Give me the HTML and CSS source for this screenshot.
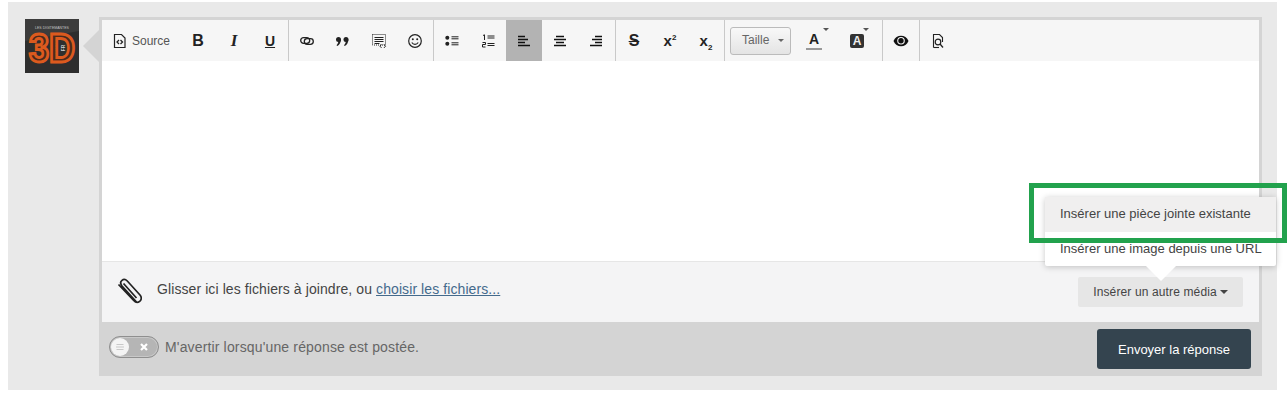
FILE: index.html
```html
<!DOCTYPE html>
<html lang="fr">
<head>
<meta charset="utf-8">
<title>Réponse</title>
<link rel="stylesheet" href="styles.css">
</head>
<body>
<div class="outer">
  <svg class="avatar" viewBox="0 0 54 54" width="54" height="54">
    <rect width="54" height="54" fill="#3c3c3c"/>
    <path d="M0 54V22L54 12V54Z" fill="#2e2e2e"/>
    <text x="27" y="10" class="logo-top" text-anchor="middle">LES DIGITEMANTES</text>
    <text x="4" y="43" class="logo-3d" textLength="46" lengthAdjust="spacingAndGlyphs">3D</text>
    <text x="38" y="31" class="logo-fr" text-anchor="middle" transform="rotate(-90 38 29)">FR</text>
  </svg>
  <div class="pointer"></div>
  <div class="editor">
    <div class="toolbar">
      <div class="group">
        <button class="tool tool-source">
          <svg class="ico" viewBox="0 0 16 16"><path d="M2.500 1.500H9.500L13 5V14.500H2.500Z" fill="none" stroke="#222" stroke-width="1.200"/><path d="M7 7 5 9l2 2M8.500 7l2 2-2 2" fill="none" stroke="#222" stroke-width="1.300"/></svg>
          <span>Source</span>
        </button>
        <button class="tool"><b class="glyph glyph-b">B</b></button>
        <button class="tool"><i class="glyph glyph-i">I</i></button>
        <button class="tool"><b class="glyph glyph-u">U</b></button>
      </div>
      <div class="group">
        <button class="tool"><svg class="ico" viewBox="0 0 16 16"><rect x="1.700" y="4.700" width="9" height="5.600" rx="2.800" fill="none" stroke="#222" stroke-width="1.300"/><rect x="5.300" y="5.700" width="9" height="5.600" rx="2.800" fill="none" stroke="#222" stroke-width="1.300"/></svg></button>
        <button class="tool"><svg class="ico" viewBox="0 0 16 16"><circle cx="3.500" cy="6.500" r="2.500" fill="#222"/><circle cx="11" cy="6.500" r="2.500" fill="#222"/><path d="M5.900 6.500C5.900 9.500 4.500 11.800 2.300 13L1.500 12.200C2.800 11 3.300 9.800 3.300 8ZM13.400 6.500c0 3-1.400 5.300-3.600 6.500L9 12.200C10.300 11 10.800 9.800 10.800 8Z" fill="#222"/></svg></button>
        <button class="tool"><svg class="ico" viewBox="0 0 16 16"><rect x="1.500" y="1.500" width="13" height="10.500" fill="none" stroke="#222" stroke-dasharray="1 1"/><path d="M3.500 4.500h9M3.500 6.500h9M3.500 8.500h9M3.500 10.500h5" stroke="#222" stroke-width="1.200"/><path d="M10.500 11.500 9 13.200l1.500 1.700M13 11.500l1.500 1.700-1.500 1.700" fill="none" stroke="#222"/></svg></button>
        <button class="tool"><svg class="ico" viewBox="0 0 16 16"><circle cx="8" cy="8" r="6.300" fill="none" stroke="#222" stroke-width="1.200"/><circle cx="5.800" cy="6.300" r="1" fill="#222"/><circle cx="10.200" cy="6.300" r="1" fill="#222"/><path d="M4.800 9.500c1.500 2.400 4.900 2.400 6.400 0" fill="none" stroke="#222" stroke-width="1.200"/></svg></button>
      </div>
      <div class="group group-align">
        <button class="tool"><svg class="ico" viewBox="0 0 16 16"><circle cx="3.300" cy="4.800" r="2" fill="#222"/><circle cx="3.300" cy="10.800" r="2" fill="#222"/><path d="M7.500 3.800h7M7.500 5.800h7M7.500 9.800h7M7.500 11.800h7" stroke="#222"/></svg></button>
        <button class="tool"><svg class="ico" viewBox="0 0 16 16"><path d="M3 2.500 4.500 1.800V7M2.500 9.500h3V11.500H2.500V14h3" fill="none" stroke="#222"/><path d="M7.500 3h7M7.500 5h7M7.500 10.500h7M7.500 12.500h7" stroke="#222"/></svg></button>
        <button class="tool tool-on"><svg class="ico" viewBox="0 0 16 16"><path d="M2 3.500h7M2 6.500h10M2 9.500h7M2 12.500h12" stroke="#111" stroke-width="1.500"/></svg></button>
        <button class="tool"><svg class="ico" viewBox="0 0 16 16"><path d="M4 3.500h8M2 6.500h12M4 9.500h8M2 12.500h12" stroke="#111" stroke-width="1.500"/></svg></button>
        <button class="tool"><svg class="ico" viewBox="0 0 16 16"><path d="M7 3.500h7M4 6.500h10M7 9.500h7M2 12.500h12" stroke="#111" stroke-width="1.500"/></svg></button>
      </div>
      <div class="group">
        <button class="tool"><b class="glyph glyph-s">S</b></button>
        <button class="tool"><b class="glyph glyph-x">x<sup class="mini">2</sup></b></button>
        <button class="tool"><b class="glyph glyph-x">x<sub class="mini">2</sub></b></button>
      </div>
      <div class="group group-font">
        <button class="select">Taille<span class="select-caret"></span></button>
        <button class="tool tool-color tool-color-a"><b class="glyph glyph-a">A</b><span class="mini-caret"></span></button>
        <button class="tool tool-color tool-color-b"><b class="glyph glyph-abg">A</b><span class="mini-caret"></span></button>
      </div>
      <div class="group">
        <button class="tool"><svg class="ico" viewBox="0 0 16 16"><path d="M.500 8C3 1 13 1 15.500 8 13 15 3 15 .500 8Z" fill="#111"/><circle cx="8" cy="7.800" r="3.800" fill="#f6f6f6"/><circle cx="8" cy="7.800" r="2.700" fill="#111"/></svg></button>
      </div>
      <div class="group group-last">
        <button class="tool"><svg class="ico" viewBox="0 0 16 16"><path d="M3.500 14.500V1.500H9.500L12.500 4.500V9" fill="none" stroke="#222" stroke-width="1.100"/><path d="M3.500 14.500H9" stroke="#222" stroke-width="1.100"/><circle cx="8" cy="9" r="2.800" fill="none" stroke="#222" stroke-width="1.200"/><path d="M10 11l3 3.500" stroke="#222" stroke-width="1.300"/></svg></button>
      </div>
    </div>
    <div class="content"></div>
    <div class="attach">
      <svg class="clip" viewBox="0 0 26 28" width="26" height="28">
        <path d="M21 24.500 6 8C4 5.500 4.500 3.500 6 2.300 7.500 1.100 9.500 1.200 11.300 3L24 17c1.900 2.200 1.500 4.900-.3 6.300-1.900 1.500-4.200 1.200-6-.8L2.500 6.500M7.500 5.500l13 14.500" fill="none" stroke="#222" stroke-width="1.700"/>
      </svg>
      <p class="attach-text">Glisser ici les fichiers à joindre, ou <a href="#" class="attach-link">choisir les fichiers...</a></p>
      <button class="media-btn">Insérer un autre média<span class="media-caret"></span></button>
      <div class="popup">
        <div class="popup-item popup-item-on">Insérer une pièce jointe existante</div>
        <div class="popup-item">Insérer une image depuis une URL</div>
      </div>
    </div>
    <div class="footer">
      <div class="toggle">
        <span class="knob"><svg viewBox="0 0 12 12" width="12" height="12"><path d="M2.500 3.500h7M2 6h8M2.500 8.500h7" stroke="#c8c8c8"/></svg></span>
        <svg class="toggle-x" viewBox="0 0 10 10" width="10" height="10"><path d="M2 2l6 6M8 2 2 8" stroke="#fff" stroke-width="2.200"/></svg>
      </div>
      <span class="notify">M'avertir lorsqu'une réponse est postée.</span>
      <button class="send">Envoyer la réponse</button>
    </div>
  </div>
</div>
<div class="annotation"></div>
</body>
</html>
```

FILE: styles.css
```css
* { box-sizing: border-box; }

html, body { margin: 0; padding: 0; }

body {
  position: relative;
  height: 400px;
  padding-top: 2px;
  background: #fff;
  font-family: "Liberation Sans", Arial, sans-serif;
  overflow: hidden;
}

button { font-family: inherit; border: 0; padding: 0; background: none; }

.outer {
  display: flex;
  align-items: flex-start;
  width: 1269px;
  height: 388px;
  margin-left: 8px;
  padding: 15px 15px 14px 17px;
  background: #e9e9e9;
}

.avatar { flex: none; display: block; margin-top: 2px; }

.logo-top { font: 3.500px "Liberation Sans", sans-serif; fill: #c4c4c4; }
.logo-3d { font: bold 40px "Liberation Sans", sans-serif; fill: #4a2a1c; stroke: #dc5a1e; stroke-width: 3px; }
.logo-fr { font: bold 5px "Liberation Sans", sans-serif; fill: #ccc; }

.pointer {
  flex: none;
  width: 0;
  height: 0;
  margin: 13px 0 0 4px;
  border-top: 16px solid transparent;
  border-bottom: 16px solid transparent;
  border-right: 16px solid #d4d4d4;
}

.editor {
  flex: none;
  width: 1163px;
  height: 359px;
  padding-top: 3px;
  background: #d4d4d4;
}

.toolbar {
  display: flex;
  height: 41px;
  margin: 0 3px;
  background: #f6f6f6;
}

.group {
  display: flex;
  align-items: stretch;
  border-right: 1px solid #c9c9c9;
}

.group-last { border-right: 0; }

.group-align { padding-right: 1px; }

.group-font { align-items: center; padding: 0 3px 0 5px; }

.tool {
  position: relative;
  display: flex;
  align-items: center;
  justify-content: center;
  width: 36px;
  height: 41px;
  color: #222;
}

.tool-source { width: 78px; gap: 4px; font-size: 12px; color: #555; }
.tool-on { background: #b3b3b3; }
.tool-color-a { width: 46px; }
.tool-color-b { width: 40px; margin-right: 2px; }

.ico { display: block; width: 16px; height: 16px; }

.glyph { font-size: 15px; line-height: 16px; color: #222; font-style: normal; }
.glyph-b { font-size: 16px; }
.glyph-i { font-family: "Liberation Serif", serif; font-style: italic; font-weight: bold; font-size: 17px; }
.glyph-u { font-size: 14px; text-decoration: underline; }
.glyph-s { text-decoration: line-through; text-decoration-thickness: 1px; font-size: 16px; }
.glyph-x { font-size: 15px; }
.glyph-a { font-size: 14px; padding: 0 3px 1px; border-bottom: 2px solid #999; line-height: 15px; }
.glyph-abg { display: block; width: 14px; height: 14px; border-radius: 2px; background: #333; color: #eee; font-size: 12px; line-height: 14px; }

.mini { font-size: 8px; line-height: 0; }

.mini-caret {
  position: absolute;
  top: 8px;
  right: 8px;
  border-left: 3px solid transparent;
  border-right: 3px solid transparent;
  border-top: 3px solid #555;
}

.select {
  display: flex;
  align-items: center;
  flex: none;
  width: 61px;
  height: 28px;
  padding: 0 0 2px 11px;
  border: 1px solid #bbb;
  border-radius: 3px;
  background: linear-gradient(#f8f8f8, #e4e4e4);
  font-size: 12px;
  color: #666;
}

.select-caret {
  margin: 2px 0 0 9px;
  border-left: 3px solid transparent;
  border-right: 3px solid transparent;
  border-top: 3px solid #666;
}

.content { height: 200px; margin: 0 3px; background: #fff; }

.attach {
  position: relative;
  display: flex;
  align-items: center;
  height: 61px;
  margin: 0 3px;
  padding: 0 16px 6px 14px;
  border-top: 1px solid #e6e6e6;
  background: #f4f4f5;
}

.clip { flex: none; margin-top: 6px; }

.attach-text { margin: 0 0 0 15px; font-size: 14px; letter-spacing: .09px; color: #444; }
.attach-link { color: #446a8c; }

.media-btn {
  display: flex;
  align-items: center;
  justify-content: center;
  gap: 3px;
  width: 165px;
  height: 30px;
  margin: 6px 0 0 auto;
  border-radius: 2px;
  background: #e6e6e6;
  font-size: 12px;
  letter-spacing: .13px;
  color: #444;
}

.media-caret {
  border-left: 4px solid transparent;
  border-right: 4px solid transparent;
  border-top: 4px solid #444;
}

.popup {
  position: absolute;
  right: -17px;
  bottom: 56px;
  width: 231px;
  background: #fff;
  border-radius: 2px;
  box-shadow: 0 1px 6px rgba(0, 0, 0, .22);
}

.popup::after {
  content: "";
  position: absolute;
  left: 101px;
  top: 100%;
  border-left: 15px solid transparent;
  border-right: 15px solid transparent;
  border-top: 15px solid #fff;
}

.popup-item {
  height: 34px;
  padding-left: 15px;
  font-size: 13px;
  line-height: 34px;
  color: #444;
  white-space: nowrap;
}

.popup-item-on { height: 35px; background: #f0efef; }

.footer {
  display: flex;
  align-items: center;
  height: 54px;
  padding: 0 11px 0 10px;
}

.toggle {
  display: flex;
  align-items: center;
  width: 50px;
  height: 22px;
  margin-bottom: 4px;
  padding-left: 1px;
  border: 1px solid #8f8f8f;
  border-radius: 11px;
  background: #b5b5b5;
  box-shadow: inset 0 0 0 1px #c8c8c8;
}

.knob {
  display: flex;
  align-items: center;
  justify-content: center;
  width: 18px;
  height: 18px;
  border-radius: 50%;
  background: #f4f4f4;
}

.toggle-x { margin-left: 10px; }

.notify { margin: 0 0 4px 6px; font-size: 14px; letter-spacing: .15px; color: #666; }

.send {
  width: 154px;
  height: 40px;
  margin-left: auto;
  border-radius: 3px;
  background: #34444f;
  color: #fff;
  font-size: 13px;
}

.annotation {
  position: absolute;
  left: 1029px;
  top: 183px;
  width: 258px;
  height: 60px;
  border: 5px solid #22a24d;
}
```
